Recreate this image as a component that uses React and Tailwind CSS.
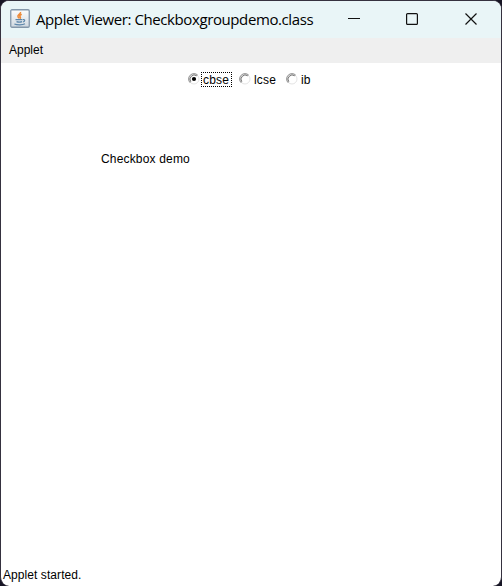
import React from "react";

function JavaIcon() {
  return (
    <svg width="20" height="20" viewBox="0 0 20 20" className="shrink-0">
      <defs>
        <linearGradient id="tile" x1="0" y1="0" x2="0" y2="1">
          <stop offset="0" stopColor="#fdfdfd" />
          <stop offset="1" stopColor="#cfd8e0" />
        </linearGradient>
      </defs>
      <rect x="0.75" y="0.75" width="18.5" height="17.5" rx="1.2" fill="url(#tile)" stroke="#8497aa" strokeWidth="1.3" />
      <path d="M10.5 3C11 5 7.3 5.8 8 7.6C8.2 8.4 9 8.9 9 9.6M11.7 5.3C9.5 6.4 9.4 7 10.3 8.1C10.7 8.7 10.3 9.2 9.9 9.6" fill="none" stroke="#ee8a38" strokeWidth="1.6" />
      <path d="M5.5 10.7h7M6.5 12.6c1.8.6 4 .6 5.6 0M13 10.7c2.3-.5 2.2 1.8 0 2.3M4.4 15c2.8 1.2 8.2 1.1 10.6-.2" fill="none" stroke="#5c86aa" strokeWidth="1.2" />
    </svg>
  );
}

function Radio({ label, checked, className }) {
  return (
    <label className={`flex h-[15px] items-center ${className}`}>
      <svg width="12" height="12" viewBox="0 0 12 12" className="mr-px mb-px shrink-0">
        <circle cx="6" cy="6" r="5" fill="#fff" stroke="#e3e3e3" />
        <path d="M2.2 9.8A5.3 5.3 0 0 1 9.8 2.2" fill="none" stroke="#909090" />
        <path d="M2.8 8.8A4.3 4.3 0 0 1 8.8 2.8" fill="none" stroke="#606060" strokeWidth="0.9" />
        {checked && <circle cx="6" cy="6" r="2.1" fill="#000" />}
      </svg>
      <span className={`flex h-[15px] items-center border border-dotted px-px tracking-[0.2px] ${checked ? "w-[31px] border-black" : "border-transparent"}`}>
        {label}
      </span>
    </label>
  );
}

export default function App() {
  return (
    <div className="h-[586px] w-[502px] bg-[#171525] font-['Liberation_Sans',Arial,sans-serif] text-[12px] leading-[14px] text-black">
      <div className="flex h-full w-full flex-col overflow-hidden rounded-[9px] border-x border-t border-[#35313f] bg-white">
        <header className="flex h-[37px] shrink-0 items-center bg-[#e9f5f7] pb-px pl-[9px]">
          <JavaIcon />
          <h1 className="ml-[6px] w-[290px] whitespace-nowrap font-['Open_Sans','Noto_Sans',sans-serif] text-[15px] leading-5 tracking-[-0.4px]">
            Applet Viewer: Checkboxgroupdemo.class
          </h1>
          <svg width="152" height="36" viewBox="0 0 152 36" fill="none" stroke="#111" className="shrink-0">
            <path d="M22 17.5h12" />
            <rect x="80.6" y="12.6" width="10.8" height="10.8" rx="1" strokeWidth="1.2" />
            <path d="M139.5 12.5l11 11M150.5 12.5l-11 11" strokeWidth="1.2" />
          </svg>
        </header>
        <nav className="flex h-[25px] shrink-0 items-center bg-[#efefef] pb-[2px] pl-2">Applet</nav>
        <main className="flex-1">
          <div className="flex pl-[187px] pt-[9px]">
            <Radio label="cbse" checked className="w-[51px]" />
            <Radio label="lcse" className="w-[47px]" />
            <Radio label="ib" className="w-[40px]" />
          </div>
          <p className="pl-[100px] pt-[65px] tracking-[0.17px]">Checkbox demo</p>
        </main>
        <footer className="h-[18px] shrink-0 pl-[2px] tracking-[0.07px]">Applet started.</footer>
      </div>
    </div>
  );
}
